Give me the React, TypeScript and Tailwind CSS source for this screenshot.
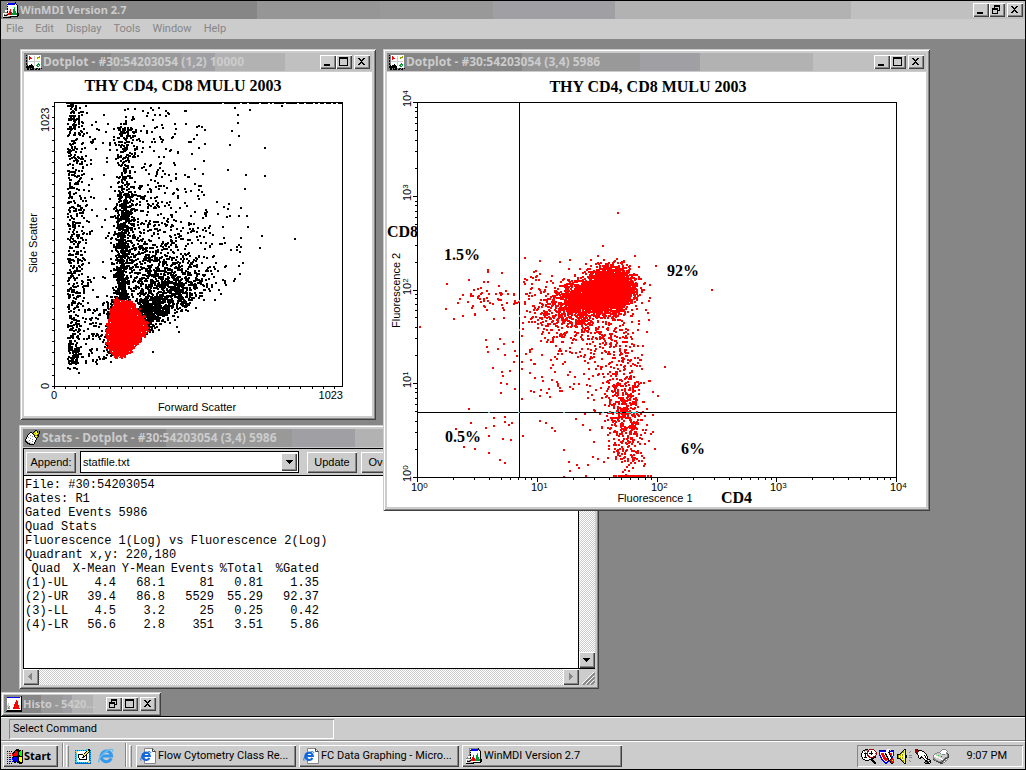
import type { ReactNode } from "react";
import clsx from "clsx";

const raised = "bg-[#cccccc] shadow-[inset_1px_1px_0_#fff,inset_-1px_-1px_0_#404040,inset_-2px_-2px_0_#868686]";
const uiFont = "font-[Roboto,'Liberation_Sans',sans-serif]";
const boldFont = "font-['Noto_Sans','Liberation_Sans',sans-serif] font-bold";
const buttonFont = "font-['Liberation_Sans',sans-serif]";

/* ---------- icons ---------- */

const palette: Record<string, string> = {
  k: "#000000",
  w: "#ffffff",
  g: "#868686",
  l: "#cccccc",
  d: "#404040",
  r: "#ff0000",
  m: "#990000",
  G: "#009933",
  L: "#00ff00",
  b: "#0000ff",
  n: "#000099",
  y: "#ffff00",
  o: "#999900",
  c: "#33ccff",
  t: "#0066cc",
  p: "#ffcc66",
};

function PixelIcon({ rows, className }: { rows: string[]; className?: string }) {
  return (
    <svg
      viewBox={`0 0 ${rows[0].length} ${rows.length}`}
      width={rows[0].length}
      height={rows.length}
      shapeRendering="crispEdges"
      aria-hidden="true"
      className={clsx("shrink-0", className)}
    >
      {rows.flatMap((row, y) =>
        [...row].map((ch, x) =>
          palette[ch] ? <rect key={`${x}-${y}`} x={x} y={y} width="1" height="1" fill={palette[ch]} /> : null,
        ),
      )}
    </svg>
  );
}

const appIcon = [
  "...gggggggggk...",
  "...gwbbbbbbbkg..",
  "...gkbbbbbbbwkg.",
  "...glwwwwwwwwwk.",
  "...gkwwwwwwwwwk.",
  "...glwwwwwwLwwk.",
  "...gkwwwwwwGwwk.",
  "..ggkwwrwwGGwwk.",
  "..wwlwwrwwGGwwk.",
  ".gwwkwrrwwGGGwk.",
  "ggggkwrmrwGGGwk.",
  "wwwwlrrmrGGGGGkk",
  "wglgkrrmrGGGGGkk",
  "wkkkgwwwwwwwwwkk",
  "wllllggkkkkkkkk.",
  "kkkkkkkk........",
];

const dotplotIcon = [
  ".ggggggggggggggg",
  "kgwwwwwwwwwwwwwg",
  "ggwrwwwwlwwwwowg",
  "kgwrrwwwlwwooowg",
  "kgwrrrwwlwwoywwg",
  "ggwrwwwwlwwwwwwg",
  "kgwwwwwwlwwwwwwg",
  "kgllllllllllllwg",
  "ggwwwwwwlwwwwwwg",
  "kgwwwwwwlwwwGwwg",
  "kgwwwkwwlwwGGGwg",
  "gkwkkkkwlwGGwGwg",
  "kkkkkkkkwwwGGwwg",
  "kkkkkkkkwwwwwwwg",
  "gkkgkgkkggkkgkgk",
  ".kk.kkkk.kk.kk..",
];

const statsIcon = [
  "..........kk....",
  ".........koyk.k.",
  ".....kk.koyykok.",
  "....kwwkoyoyyok.",
  "...kwwwwkoyyok..",
  "..kwwgwwwkookk..",
  "..kwwwwgwkyyok..",
  ".kwgwwwwwwkok...",
  ".kwwwgwwwwwk....",
  "kwwwwwwgwwwk....",
  "klwwgwwwwwk.....",
  "kkllwwwgwwk.....",
  ".kklllwwwk......",
  "..kkklllwk......",
  "....kkkkk.......",
  "................",
];

const histoIcon = [
  "gggggggggggggggk",
  "gbbbbbbbbbbbbbwk",
  "gwwwwwwwwwwwwwwk",
  "gwwwwwwwwwwwwwwk",
  "gwwwwwwwwwrwwwwk",
  "gwwwwwwwwwrrwwwk",
  "gwwwwwwwwrrrwwwk",
  "gwlwwwwwwrrrwwwk",
  "gwlwwwwwrrrrwwwk",
  "gllwwwwwrrrrrwwk",
  "gllgwwwwrrrrrwwk",
  "glglwwwrrrrrrwwk",
  "glggwwwrrrrrrrwk",
  "gwwwwwwwwwwwwwwk",
  "gkkkkkkkkkkkkkkk",
  "kkkkkkkkkkkkkkkk",
];

const flagIcon = [
  ".........kkk....",
  "........kkkkkk.k",
  "k.k.k..krrkkkLLk",
  "......kkrrrkLLLk",
  "r.rr.kkrrrrkLLLk",
  ".....rkrrrrkLLLk",
  "r.rr.rkrrrkkkLLk",
  "......kkkkkkkkkk",
  "k.kk.kkbbbkkyyyk",
  ".....bkbbbbkyyyk",
  "b.bb.bkbbbbkyyyk",
  "......kbbbbkyyyk",
  "b.bb.bkkkbbkkyyk",
  ".......kk.kkkkkk",
  "k.k.k.......kkk.",
];

const desktopIcon = [
  "...........cckk.",
  "tctctctctctcpkkt",
  "cppwwwwwwwwkpykc",
  "tpwwwwwwwwkpyktt",
  "ccwwwwwwwkpykwtc",
  "tcwkkkkkwpykwwtt",
  "ccwkwwwwkykkwwtc",
  "tcwkwwwwkkwkwwtt",
  "ccwkwwwkkwwkwwtc",
  "tcwwkwwwwwwkwwtt",
  "ccwwkkkkkkkkwwtc",
  "tcwwwwwwwwwwwwtt",
  "ccwwwwwwwwwwwppc",
  "tctctctctctctppt",
  "tttttttttttttttt",
];

const magnifierIcon = [
  "....kkk.mmmmm...",
  "..kkgggmwwwwwm..",
  ".kwgwwmmwwkwwwm.",
  ".kwwgwmwwwkwwwwm",
  "kwwkkkmwkkkkwwrm",
  "kwwwkwmwwwkwwwwm",
  "kwwwkwmmwwwwwwm.",
  "kwwwkwwmmwwwmmk.",
  ".kwkkkwwmmmmmkk.",
  ".kwwwwwwwwkkk...",
  "..kkwwwwkkkk....",
  "....kkkk..kkk...",
  "...........kkk..",
  "............kkk.",
  ".............kk.",
];

const shieldIcon = [
  "........www.....",
  "nnnnnnnwwwk.nnn.",
  "bbbbbbbwwwkbbbb.",
  "bwwwwwwwwkkwwwb.",
  "bwrrrwkwwwkrrwb.",
  "bwrrrwkkwwkrrwb.",
  "bbwrrrwkwwwkrwb.",
  ".bwrrrwkkwwkrb..",
  ".bbwrrrwkwwwkb..",
  "..bwrrrrkkwwkr..",
  "..bbwrrrrkwkrrr.",
  "...bbwrrwkkrryr.",
  "....bbwwbbrkrrr.",
  ".....bbbb..krrk.",
  "......bb....kk..",
];

const speakerIcon = [
  ".......kk.......",
  "......kyk.......",
  ".....koyk....g..",
  "....kooyk...g...",
  "...kowyyk.......",
  "kkkowoyyk.......",
  "koyowoywkk..ggg.",
  "koyywyywkk......",
  "koyowoywkk..ggg.",
  "kkkowoyyk.......",
  "...kowyyk.......",
  "....kooyk...g...",
  ".....koyk....g..",
  "......kyk.......",
  ".......kk.......",
];

const handIcon = [
  "mmk.............",
  "mmmkkkk.........",
  "mmmmwwwkk.......",
  "mmmwwwwwwk......",
  ".kmwwwwwwwk.....",
  "..kwwwwwwwwk....",
  "...kwwwwwkwk....",
  "...kwwkwwwkwk...",
  "...kwkkkwwkwk...",
  "....kk..kwwkk...",
  ".........kwwkkk.",
  "..........kkgwgk",
  "..........kkkgkk",
  ".........kggkkwk",
  "..........kkkkk.",
];

const printerIcon = [
  ".........gggg...",
  "........gwwwwg..",
  ".......gwwwwwwg.",
  "....gggwwwwwwg..",
  "..gglllgwwwwwgd.",
  ".glllllllgggllgd",
  "gwwllLllllllllgd",
  "gwwwwlllrlllllgd",
  "gllwwwwlllllggdd",
  "ggllllwwwllgddg.",
  "dgglllllwwgdgwg.",
  ".dggglllggdggg..",
  "...ddggggdgwg...",
  ".....ddddggg....",
  ".......ddd......",
];

function ExplorerMark() {
  return (
    <svg viewBox="0 0 16 16" width="16" height="16" aria-hidden="true" className="shrink-0">
      <path d="M13.2 10.4A5.3 5.3 0 1 1 13.6 8H4" fill="none" stroke="#3399ee" strokeWidth="3" />
      <path d="M1.2 14.6C-1 12 5 4.4 10.6 2c3-1.2 4.6-.6 4 1.6" fill="none" stroke="#66bbee" strokeWidth="1.4" />
    </svg>
  );
}

function ExplorerPage() {
  return (
    <svg viewBox="0 0 16 16" width="16" height="16" aria-hidden="true" className="shrink-0">
      <path d="M4.5 .5h8l3 3v12h-11z" fill="#fff" stroke="#868686" />
      <path d="M12.5 .5v3h3" fill="none" stroke="#404040" />
      <path d="M9.4 10A3.7 3.7 0 1 1 9.8 8H3" fill="none" stroke="#1166dd" strokeWidth="2.2" />
      <path d="M1 12.5C-.2 10 4 5.5 8 4c2-.8 3-.2 2.6 1" fill="none" stroke="#1166dd" strokeWidth="1" />
    </svg>
  );
}

/* ---------- window chrome ---------- */

type Control = "minimize" | "maximize" | "restore" | "close";

const glyphs: Record<Control, ReactNode> = {
  minimize: <path d="M4 9h6v2H4z" />,
  maximize: <path d="M3 2h9v9H3zM4 4v6h7V4z" fillRule="evenodd" />,
  restore: (
    <path d="M5 2h6v6h-2v-1h1v-3h-4v1h-1zM3 5h6v6h-6zM4 7v3h4v-3z" fillRule="evenodd" />
  ),
  close: (
    <path d="M4 3h2v1h1v1h1v-1h1v-1h2v1h-1v1h-1v1h-1v1h1v1h1v1h1v1h-2v-1h-1v-1h-1v1h-1v1h-2v-1h1v-1h1v-1h1v-1h-1v-1h-1v-1h-1z" />
  ),
};

function ControlButton({ kind }: { kind: Control }) {
  return (
    <button type="button" aria-label={kind} className={clsx("h-[14px] w-4", raised)}>
      <svg viewBox="0 0 16 14" width="16" height="14" shapeRendering="crispEdges" aria-hidden="true">
        {glyphs[kind]}
      </svg>
    </button>
  );
}

function TitleBar({
  icon,
  title,
  controls,
  fill,
  size = "text-[12px]",
}: {
  icon: string[];
  title: string;
  controls: Control[];
  fill: string;
  size?: string;
}) {
  return (
    <div className={clsx("flex h-[18px] items-center px-0.5", fill)}>
      <PixelIcon rows={icon} />
      <h2 className={clsx("min-w-0 flex-1 pl-px leading-[18px] whitespace-nowrap text-[#cccccc]", boldFont, size)}>
        {title}
      </h2>
      <div className="flex">
        <ControlButton kind={controls[0]} />
        <ControlButton kind={controls[1]} />
        <span className="w-0.5" />
        <ControlButton kind={controls[2]} />
      </div>
    </div>
  );
}

const bands =
  "bg-[linear-gradient(90deg,#868686_25%,#969696_25%_36%,#999999_36%_47%,#a0a0a4_47%_58%,#b2b2b2_58%_79%,#c0c0c0_79%)]";
const narrowBands =
  "bg-[linear-gradient(90deg,#868686_25%,#969696_25%_35%,#999999_35%_45%,#a0a0a4_45%_55%,#b2b2b2_55%_75%,#c0c0c0_75%)]";
const wideBands =
  "bg-[linear-gradient(90deg,#868686_25%,#969696_25%_37%,#999999_37%_48%,#a0a0a4_48%_60%,#b2b2b2_60%_83%,#c0c0c0_83%)]";
const shortBands =
  "bg-[linear-gradient(90deg,#868686_24%,#999999_24%_38%,#a0a0a4_38%_44%,#b2b2b2_44%_58%,#c0c0c0_58%)]";

function Frame({ className, children }: { className: string; children: ReactNode }) {
  return (
    <section
      className={clsx(
        "absolute bg-[#cccccc] shadow-[inset_1px_1px_0_#cccccc,inset_-1px_-1px_0_#404040,inset_2px_2px_0_#fff,inset_-2px_-2px_0_#868686]",
        className,
      )}
    >
      {children}
    </section>
  );
}

/* ---------- plots ---------- */

type Point = [number, number];

function createRandom(seed: number) {
  let s = seed;
  const next = () => {
    s = (s * 1664525 + 1013904223) % 4294967296;
    return s / 4294967296;
  };
  const gauss = () => Math.sqrt(-2 * Math.log(next() + 1e-9)) * Math.cos(2 * Math.PI * next());
  return { next, gauss };
}

const toPath = (points: Point[]) => points.map(([x, y]) => `M${Math.round(x)} ${Math.round(y)}h2v2h-2z`).join("");

function scatterEvents() {
  const { next, gauss } = createRandom(30);
  const points: Point[] = [];
  const floor = (x: number) => 336 - (x - 150) * 0.64;

  // debris next to the side scatter axis
  for (let i = 0; i < 620; i++) {
    const x = 67 + Math.abs(gauss()) * 10;
    const y = 104 + next() * 258;
    if (x < 98) points.push([x, y]);
  }
  for (let i = 0; i < 60; i++) points.push([73 + gauss() * 3, 354 + gauss() * 7]);
  for (let i = 0; i < 70; i++) points.push([84 + next() * 26, 362 - next() * 60]);
  for (let i = 0; i < 40; i++) points.push([80 + next() * 34, 110 + next() * 190]);

  // granular column above the gate
  for (let i = 0; i < 1200; i++) {
    const y = 306 - Math.pow(next(), 1.35) * 180;
    const drift = 121 + (300 - y) * 0.02;
    if (y > 200 || next() < 0.5) points.push([drift + gauss() * (y > 240 ? 4 : 4.8), y]);
  }
  for (let i = 0; i < 35; i++) points.push([124 + gauss() * 6, 106 + next() * 40]);
  for (let i = 0; i < 130; i++) points.push([110 + gauss() * 3, 300 + next() * 55]);

  // spread towards large cells
  for (let i = 0; i < 620; i++) {
    const x = 130 + Math.abs(gauss()) * 30 + next() * 10;
    const y = floor(x) - 6 - Math.abs(gauss()) * 38;
    if (x < 245 && y < floor(x)) points.push([x, y]);
  }
  for (let i = 0; i < 360; i++) {
    const x = 149 + gauss() * 9;
    const y = 311 + gauss() * 8 - (x - 150) * 0.3;
    if (x > 138 && y < floor(x)) points.push([x, y]);
  }
  for (let i = 0; i < 300; i++) points.push([178 + gauss() * 14, 287 + gauss() * 13]);
  for (let i = 0; i < 620; i++) {
    const x = 128 + Math.abs(gauss()) * 48;
    const y = 290 - Math.abs(gauss()) * 76;
    if (x < 246 && y > 106) points.push([x, y]);
  }
  for (let i = 0; i < 60; i++) points.push([130 + next() * 75, 106 + next() * 100]);

  const strays: Point[] = [
    [264, 147], [264, 175], [294, 238], [261, 235], [259, 247], [247, 226], [244, 188], [245, 174], [227, 169],
    [249, 109], [281, 105], [229, 144], [231, 130], [237, 114], [234, 107], [237, 122], [238, 135], [152, 351],
    [178, 331], [176, 326], [214, 299], [220, 293], [233, 280], [239, 273], [78, 372], [67, 367], [96, 363],
    [240, 207], [238, 215], [242, 262],
  ];
  return points
    .filter(([x, y]) => x < 246 && y > 103 && !(x > 150 && y > floor(x)) && !(x > 205 && y < 200))
    .concat(strays);
}

const gateOutline: Point[] = [
  [115, 299], [123, 300], [131, 302], [136, 307], [141, 313], [145, 320], [149, 328], [147, 334], [142, 337],
  [139, 343], [133, 350], [127, 355], [122, 358], [115, 357], [110, 353], [108, 346], [106, 337], [107, 327],
  [109, 317], [112, 308],
];

function gateEdge() {
  const { next } = createRandom(7);
  const points: Point[] = [];
  gateOutline.forEach(([x, y], i) => {
    const [nx, ny] = gateOutline[(i + 1) % gateOutline.length];
    for (let k = 0; k < 3; k++) {
      const t = next();
      points.push([x + (nx - x) * t - 1 + (next() - 0.5) * 3, y + (ny - y) * t - 1 + (next() - 0.5) * 3]);
    }
  });
  return points;
}

function fluorescenceEvents() {
  const { next, gauss } = createRandom(54203);
  const points: Point[] = [];

  // double positive cluster and its tail
  for (let i = 0; i < 3600; i++) points.push([610 + gauss() * 10.5, 288 + gauss() * 9.5]);
  for (let i = 0; i < 1900; i++) {
    const u = gauss();
    points.push([592 + u * 15, 295 - u * 2 + gauss() * 8.5]);
  }
  for (let i = 0; i < 330; i++) points.push([563 + gauss() * 20, 312 + gauss() * 13]);
  for (let i = 0; i < 240; i++) points.push([598 + gauss() * 22, 326 + gauss() * 20]);
  for (let i = 0; i < 110; i++) points.push([520 + next() * 110, 310 + next() * 90]);
  for (let i = 0; i < 40; i++) points.push([540 + gauss() * 14, 288 + gauss() * 14]);

  // CD4 single positives
  for (let i = 0; i < 200; i++) points.push([618 + gauss() * 12, 340 + next() * 80]);
  for (let i = 0; i < 350; i++) points.push([626 + gauss() * 8.5, 425 + gauss() * 26]);
  for (let i = 0; i < 30; i++) points.push([629 + gauss() * 9, 475]);
  for (let i = 0; i < 16; i++) points.push([560 + next() * 90, 395 + next() * 75]);

  // CD8 single positives
  for (let i = 0; i < 56; i++) points.push([486 + gauss() * 17, 297 + gauss() * 9]);
  for (let i = 0; i < 20; i++) points.push([483 + next() * 34, 318 + next() * 88]);

  const strays: Point[] = [
    [617, 212], [602, 245], [655, 265], [711, 289], [664, 366], [419, 326], [445, 308], [446, 283], [453, 318],
    [487, 271], [569, 259], [590, 259], [597, 255], [634, 255], [568, 268], [535, 276], [539, 273], [648, 319],
    [648, 380], [657, 395], [652, 391], [652, 414], [652, 431], [654, 448], [468, 408], [455, 428], [470, 422],
    [463, 446], [474, 448], [488, 452], [499, 459], [504, 462], [502, 438], [510, 439], [508, 424], [504, 421],
    [493, 425], [485, 427], [488, 435], [493, 417], [504, 416], [511, 422], [539, 420], [545, 422], [551, 427],
    [554, 430], [522, 435], [563, 449], [568, 461], [578, 467], [563, 476], [585, 475], [576, 464], [597, 458],
  ];
  return points
    .filter(([x, y]) => x > 442 && x < 652 && y > 256 && y < 476 && !(x < 519 && y > 408))
    .concat(strays);
}

const blackDots = toPath(scatterEvents());
const gateDots = toPath(gateEdge());
const redDots = toPath(fluorescenceEvents());
const linearTicks = Array.from({ length: 26 }, (_, i) => Math.round(i * 11.2));
const saturatedGaps = [222, 240, 247, 259, 268, 272, 284, 297, 304, 313, 318, 324, 331, 336];
const gateSpecks: Point[] = [
  [113, 305], [120, 301], [137, 315], [110, 322], [143, 325], [108, 334], [141, 332], [112, 351], [129, 351],
  [134, 345], [109, 341], [146, 331], [119, 356], [131, 308],
];

const logSteps = [2, 3, 4, 5, 6, 7, 8, 9].map((n) => Math.log10(n));
const superscripts = ["0", "1", "2", "3", "4"];

function ForwardScatterPlot() {
  return (
    <svg
      viewBox="24 72 348 344"
      className="block w-full bg-white font-['Liberation_Sans',sans-serif] text-[11px]"
      shapeRendering="crispEdges"
      role="img"
      aria-label="Forward scatter against side scatter"
    >
      <text x="183" y="91" textAnchor="middle" className="font-['Liberation_Serif',serif] text-[16px] font-bold">
        THY CD4, CD8 MULU 2003
      </text>
      <rect x="54.5" y="102.5" width="288" height="284" fill="none" stroke="#000" />
      <path d="M66 103h276v1H66z" />
      {saturatedGaps.map((x) => (
        <rect key={x} x={x} y="103" width="2" height="1" fill="#fff" />
      ))}
      <path d={blackDots} />
      <polygon points={gateOutline.map((p) => p.join(",")).join(" ")} fill="#ff0000" />
      <path d={gateDots} fill="#ff0000" />
      {gateSpecks.map(([x, y]) => (
        <rect key={`${x}-${y}`} x={x} y={y} width="1" height="1" fill="#fff" />
      ))}
      {linearTicks.map((t) => (
        <path key={t} d={`M${54 + t} 387h1v2h-1zM52 ${386 - t}h2v1h-2z`} />
      ))}
      <text x="51" y="399">0</text>
      <text x="343" y="399" textAnchor="end">1023</text>
      <text x="197" y="411" textAnchor="middle">Forward Scatter</text>
      <text transform="translate(49 389) rotate(-90)">0</text>
      <text transform="translate(49 132) rotate(-90)">1023</text>
      <text transform="translate(37 273) rotate(-90)">Side Scatter</text>
    </svg>
  );
}

function FluorescencePlot() {
  const left = 417;
  const bottom = 477;
  const decadeX = 119.75;
  const decadeY = 93.75;

  return (
    <svg
      viewBox="387 72 539 435"
      className="block w-full bg-white font-['Liberation_Sans',sans-serif] text-[11px]"
      shapeRendering="crispEdges"
      role="img"
      aria-label="Fluorescence 1 against fluorescence 2"
    >
      <path d={redDots} fill="#ff0000" />
      <rect x="417.5" y="102.5" width="479" height="375" fill="none" stroke="#000" />
      <path d="M519 103h1v374h-1zM418 412h478v1H418z" />
      <path
        d="M488 412h2v1h-2zM518 412h2v1h-2zM563 412h2v1h-2zM602 412h2v1h-2zM608 412h3v1h-3zM614 412h4v1h-4zM620 412h2v1h-2zM626 412h5v1h-5zM632 412h6v1h-6zM519 300h1v2h-1zM519 315h1v2h-1zM519 329h1v2h-1z"
        fill="#33cccc"
      />
      {superscripts.map((power, i) => {
        const x = Math.round(left + i * decadeX);
        const y = Math.round(bottom - i * decadeY);
        return (
          <g key={power}>
            <path d={`M${x} 478h1v4h-1zM413 ${y}h4v1h-4z`} />
            {i < 4 &&
              logSteps.map((s) => (
                <path
                  key={s}
                  d={`M${Math.round(x + s * decadeX)} 478h1v2h-1zM415 ${Math.round(y - s * decadeY)}h2v1h-2z`}
                />
              ))}
            <text x={x - 6} y="491">
              10<tspan dy="-3" className="text-[8px]">{power}</tspan>
            </text>
            <text transform={`translate(411 ${y + 5}) rotate(-90)`}>
              10<tspan dy="-3" className="text-[8px]">{power}</tspan>
            </text>
          </g>
        );
      })}
      <text x="655" y="502" textAnchor="middle">Fluorescence 1</text>
      <text transform="translate(400 328) rotate(-90)">Fluorescence 2</text>
      <g className="font-['Liberation_Serif',serif] text-[16px] font-bold">
        <text x="648" y="92" textAnchor="middle">THY CD4, CD8 MULU 2003</text>
        <text x="387" y="237">CD8</text>
        <text x="721" y="503">CD4</text>
        <text x="444" y="260">1.5%</text>
        <text x="667" y="276">92%</text>
        <text x="445" y="442">0.5%</text>
        <text x="681" y="454">6%</text>
      </g>
    </svg>
  );
}

/* ---------- stats window ---------- */

const statLines = [
  "File: #30:54203054",
  "Gates: R1",
  "Gated Events 5986",
  "Quad Stats",
  "Fluorescence 1(Log) vs Fluorescence 2(Log)",
  "Quadrant x,y: 220,180",
];

const statRows = [
  ["(1)-UL", "4.4", "68.1", "81", "0.81", "1.35"],
  ["(2)-UR", "39.4", "86.8", "5529", "55.29", "92.37"],
  ["(3)-LL", "4.5", "3.2", "25", "0.25", "0.42"],
  ["(4)-LR", "56.6", "2.8", "351", "3.51", "5.86"],
];

const checker = "bg-[conic-gradient(#fff_25%,#cccccc_0_50%,#fff_0_75%,#cccccc_0)] bg-[length:2px_2px]";

function ScrollButton({ label, d, disabled }: { label: string; d: string; disabled?: boolean }) {
  return (
    <button type="button" aria-label={label} disabled={disabled} className={clsx("size-4 shrink-0", raised)}>
      <svg viewBox="0 0 16 16" width="16" height="16" shapeRendering="crispEdges" aria-hidden="true">
        <path d={d} fill={disabled ? "#868686" : "#000"} />
      </svg>
    </button>
  );
}

function StatsWindow() {
  return (
    <Frame className="top-[386px] left-[18px] w-[580px] p-1">
      <TitleBar
        icon={statsIcon}
        title="Stats - Dotplot - #30:54203054 (3,4) 5986"
        controls={["minimize", "maximize", "close"]}
        fill={bands}
      />
      <div
        className={clsx(
          "mt-px flex items-center gap-1 border-t border-l border-black pt-0.5 pb-0.5 pl-0.5 text-[11px]",
          buttonFont,
        )}
      >
        <button type="button" className={clsx("h-[21px] w-[50px]", raised)}>
          Append:
        </button>
        <div className="relative w-[219px]">
          <select
            aria-label="Stats file"
            className="h-[22px] w-full appearance-none border border-black bg-white pl-0.5 text-[11px]"
          >
            <option>statfile.txt</option>
          </select>
          <span
            className={clsx(
              "pointer-events-none absolute top-0.5 right-0.5 flex h-[18px] w-4 items-center justify-center",
              raised,
            )}
          >
            <svg viewBox="0 0 7 4" width="7" height="4" shapeRendering="crispEdges" aria-hidden="true">
              <path d="M0 0h7v1H6v1H5v1H4v1H3V3H2V2H1V1H0z" />
            </svg>
          </span>
        </div>
        <button type="button" className={clsx("ml-1 h-[21px] w-[50px]", raised)}>
          Update
        </button>
        <button type="button" className={clsx("h-[21px] w-[62px]", raised)}>
          Overwrite
        </button>
      </div>
      <div className="flex border-t border-black">
        <div className="h-[192px] flex-1 border-x border-black bg-white pt-0.5 pl-px font-['Liberation_Mono',monospace] text-[12px] leading-[14px] whitespace-nowrap">
          {statLines.map((line) => (
            <p key={line}>{line}</p>
          ))}
          <table className="w-[294px] table-fixed text-right">
            <thead>
              <tr>
                <th className="w-[42px] text-center font-normal">Quad</th>
                <th className="font-normal">X-Mean</th>
                <th className="font-normal">Y-Mean</th>
                <th className="font-normal">Events</th>
                <th className="font-normal">%Total</th>
                <th className="w-14 font-normal">%Gated</th>
              </tr>
            </thead>
            <tbody>
              {statRows.map(([quad, ...values]) => (
                <tr key={quad}>
                  <td className="text-left">{quad}</td>
                  {values.map((value, i) => (
                    <td key={i}>{value}</td>
                  ))}
                </tr>
              ))}
            </tbody>
          </table>
        </div>
        <div className={clsx("flex w-4 flex-col justify-between", checker)}>
          <ScrollButton label="Scroll up" d="M7 6h1v1h1v1h1v1h1v1H4V9h1V8h1V7h1z" />
          <ScrollButton label="Scroll down" d="M4 6h7v1h-1v1H9v1H8v1H7V9H6V8H5V7H4z" />
        </div>
      </div>
      <div className="flex border-t border-black">
        <div className={clsx("flex flex-1 justify-between", checker)}>
          <ScrollButton label="Scroll left" d="M9 4v7H8v-1H7V9H6V8H5V7h1V6h1V5h1V4z" disabled />
          <ScrollButton label="Scroll right" d="M6 4h1v1h1v1h1v1h1v1H9v1H8v1H7v1H6z" disabled />
        </div>
        <svg viewBox="0 0 16 16" width="16" height="16" aria-hidden="true">
          <path d="M4 16 16 4M8 16l8-8M12 16l4-4" stroke="#868686" strokeWidth="2" />
          <path d="M3 15 15 3M7 15l8-8M11 15l4-4" stroke="#fff" />
        </svg>
      </div>
    </Frame>
  );
}

/* ---------- page ---------- */

const menus = ["File", "Edit", "Display", "Tools", "Window", "Help"];

const tasks = [
  { label: "Flow Cytometry Class Re...", icon: <ExplorerPage /> },
  { label: "FC Data Graphing - Micro...", icon: <ExplorerPage /> },
  { label: "WinMDI Version 2.7", icon: <PixelIcon rows={appIcon} /> },
];

function Grip() {
  return (
    <span className="mt-1 ml-0.5 h-[22px] w-[3px] border-t border-r border-l border-t-white border-r-[#868686] border-l-white" />
  );
}

function Taskbar() {
  return (
    <footer className="flex h-[29px] items-start border-t border-[#868686] bg-[#cccccc] px-0.5 text-[11px] shadow-[inset_0_1px_0_#fff]">
      <button
        type="button"
        className={clsx("mt-1 flex h-[22px] w-[55px] items-center gap-px pl-1", boldFont, raised)}
      >
        <PixelIcon rows={flagIcon} />
        Start
      </button>
      <span className="mt-0.5 ml-1 h-6 w-0.5 border-l border-[#868686] bg-white" />
      <Grip />
      <button type="button" aria-label="Show Desktop" className="mt-2 ml-1.5">
        <PixelIcon rows={desktopIcon} />
      </button>
      <button type="button" aria-label="Internet Explorer" className="mt-[7px] ml-[7px]">
        <ExplorerMark />
      </button>
      <span className="mt-0.5 ml-[11px] h-6 w-0.5 border-l border-[#868686] bg-white" />
      <Grip />
      <div className="mt-1 ml-1 flex min-w-0 flex-1 gap-[3px]">
        {tasks.map((task) => (
          <button
            key={task.label}
            type="button"
            className={clsx("flex h-[22px] w-40 items-center gap-0.5 pl-1 whitespace-nowrap", raised)}
          >
            {task.icon}
            {task.label}
          </button>
        ))}
      </div>
      <div className="mt-1 flex h-[22px] w-[166px] items-center gap-0.5 pl-1 shadow-[inset_1px_1px_0_#868686,inset_-1px_-1px_0_#fff]">
        <PixelIcon rows={magnifierIcon} />
        <PixelIcon rows={shieldIcon} />
        <PixelIcon rows={speakerIcon} />
        <PixelIcon rows={handIcon} />
        <PixelIcon rows={printerIcon} />
        <time className="ml-auto pr-4">9:07 PM</time>
      </div>
    </footer>
  );
}

export default function App() {
  return (
    <div className={clsx("flex min-h-screen flex-col border border-black bg-[#cccccc] text-black", uiFont)}>
      <TitleBar
        icon={appIcon}
        title="WinMDI Version 2.7"
        controls={["minimize", "restore", "close"]}
        fill={wideBands}
        size="text-[11px]"
      />
      <nav className="flex h-5 items-center gap-3 pl-[5px] text-[11px] text-[#868686]">
        {menus.map((menu) => (
          <button key={menu} type="button">
            {menu}
          </button>
        ))}
      </nav>
      <main className="relative flex-1 overflow-hidden bg-[#868686]">
        <Frame className="top-2.5 left-[19px] w-[356px] p-1">
          <TitleBar
            icon={dotplotIcon}
            title="Dotplot - #30:54203054 (1,2) 10000"
            controls={["minimize", "maximize", "close"]}
            fill={narrowBands}
          />
          <div className="mt-px">
            <ForwardScatterPlot />
          </div>
        </Frame>
        <StatsWindow />
        <Frame className="top-2.5 left-[382px] w-[547px] p-1">
          <TitleBar
            icon={dotplotIcon}
            title="Dotplot - #30:54203054 (3,4) 5986"
            controls={["minimize", "maximize", "close"]}
            fill={bands}
          />
          <div className="mt-px">
            <FluorescencePlot />
          </div>
        </Frame>
        <Frame className="bottom-0 left-0 w-40 p-[3px]">
          <TitleBar
            icon={histoIcon}
            title="Histo - 5420..."
            controls={["restore", "maximize", "close"]}
            fill={shortBands}
            size="text-[11px]"
          />
        </Frame>
      </main>
      <div className="flex h-6 items-start border-t border-black pt-0.5 pl-2 text-[11px] shadow-[inset_0_1px_0_#fff]">
        <p
          role="status"
          className="h-5 w-[325px] pl-1 leading-5 shadow-[inset_1px_1px_0_#868686,inset_-1px_-1px_0_#fff]"
        >
          Select Command
        </p>
      </div>
      <Taskbar />
    </div>
  );
}
